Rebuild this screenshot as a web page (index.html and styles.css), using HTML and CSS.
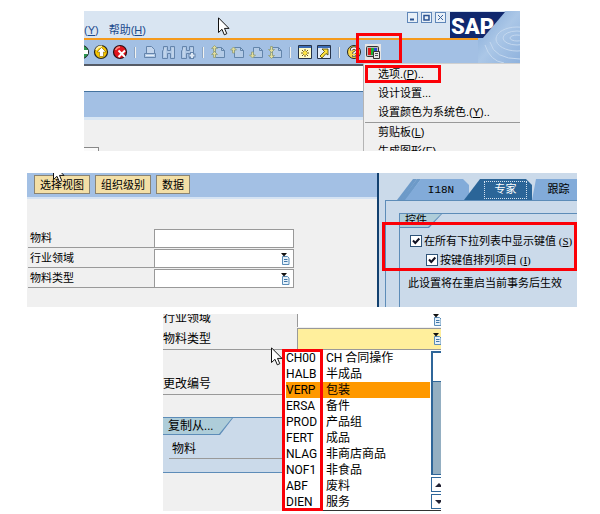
FILE: index.html
```
<!DOCTYPE html>
<html lang="zh-CN">
<head>
    <meta charset="UTF-8">
    <meta name="viewport" content="width=device-width, initial-scale=1.0">
    <title>SAP 选项设置</title>
    <link rel="stylesheet" href="styles.css">
</head>
<body>
    <svg class="defs" width="0" height="0" aria-hidden="true">
        <symbol id="cursor" viewBox="0 0 12 19">
            <path d="M.5 .8V15.5L4 12.3L6.3 17.8L8.8 16.7L6.5 11.4H11Z" fill="#fff" stroke="#111" stroke-width="1"/>
        </symbol>
        <symbol id="page" viewBox="0 0 16 16">
            <path d="M5.500 3.500H11.500L14.500 6.500V13.500H5.500Z" fill="#b4cbe6" stroke="#6385ab"/>
            <path d="M11.500 3.500V6.500H14.500" fill="none" stroke="#6385ab"/>
        </symbol>
        <symbol id="up" viewBox="0 0 7 7">
            <path d="M3.500 .5L6.500 3.500H4.500V6.500H2.500V3.500H.5Z" fill="#e4dd98" stroke="#8e9c7c" stroke-width=".8"/>
        </symbol>
        <symbol id="binoculars" viewBox="0 0 16 16">
            <path d="M2.500 2.500H6.500V6.500H9.500V2.500H13.500V14.500H9.500V9.500H6.500V14.500H1.500V7L2.500 5.500Z" fill="#afc7e4" stroke="#6484ac"/>
            <path d="M4 4V13M12 4V13" stroke="#d2e0f0"/>
        </symbol>
        <symbol id="picker" viewBox="0 0 9 12">
            <path d="M1.500 3.500H6.500L8 5V11.500H1.500Z" fill="#e6f1fa" stroke="#5b8db8"/>
            <path d="M3 6.500H6.500M3 8.500H6.500" stroke="#4177a8"/>
            <path d="M0 0H6L3 3.500Z" fill="#111"/>
        </symbol>
    </svg>

    <main>
        <!-- main window with local layout menu -->
        <section class="shot shot-menu">
            <div class="menubar">
                <button class="menu-btn">(<u>Y</u>)</button>
                <button class="menu-btn">帮助(<u>H</u>)</button>
                <div class="win-controls">
                    <button aria-label="最小化"><svg viewBox="0 0 9 9"><path d="M2 6.500H6" stroke="#2a5291" stroke-width="2"/></svg></button>
                    <button aria-label="最大化"><svg viewBox="0 0 9 9"><path d="M2 2.500H7V7H2Z" fill="none" stroke="#2a5291" stroke-width="1.500"/></svg></button>
                    <button aria-label="关闭"><svg viewBox="0 0 9 9"><path d="M2 2L7 7M7 2L2 7" stroke="#3a629e"/></svg></button>
                </div>
            </div>
            <div class="toolbar">
                <button class="tool first" aria-label="返回"><svg viewBox="0 0 16 16"><circle cx="8" cy="8" r="6.500" fill="#2c9a50" stroke="#222"/><path d="M8 6H14V10H8Z" fill="#fff"/></svg></button>
                <button class="tool" aria-label="退出"><svg viewBox="0 0 16 16"><circle cx="8" cy="8" r="6.500" fill="#f5c400" stroke="#222" stroke-width="1.200"/><path d="M3 6Q5 2 9 2.500" stroke="#fff2a0" stroke-width="2" fill="none"/><path d="M8.500 3.500L13 8H10.500V12.500H6.500V8H4Z" fill="#fff" stroke="#846800" stroke-width=".6"/></svg></button>
                <button class="tool" aria-label="取消"><svg viewBox="0 0 16 16"><circle cx="8" cy="8" r="6.500" fill="#e0141c" stroke="#2a1014" stroke-width="1.200"/><path d="M3.500 6Q5 3 8 3" stroke="#ff8a80" stroke-width="1.500" fill="none"/><path d="M6.500 6.500L13 13M13 6.500L6.500 13" stroke="#fff" stroke-width="2"/></svg></button>
                <span class="sep"></span>
                <button class="tool" aria-label="打印"><svg viewBox="0 0 16 16"><path d="M4.500 9.500V2.500H9.500L12.500 5.500V9.500" fill="#c3d5ec" stroke="#6484ac"/><path d="M2.500 9.500H13.500V13.500H2.500Z" fill="#b4cbe6" stroke="#6484ac"/><path d="M4 11.500H12" stroke="#e2ecf6"/></svg></button>
                <button class="tool" aria-label="查找"><svg viewBox="0 0 16 16"><use href="#binoculars"/></svg></button>
                <button class="tool" aria-label="继续查找"><svg viewBox="0 0 16 16"><use href="#binoculars"/><path d="M12 8V15M8.500 11.500H15.500" stroke="#6484ac" stroke-width="4"/><path d="M12 9V14M9.500 11.500H14.500" stroke="#dde8f4" stroke-width="2"/></svg></button>
                <span class="sep"></span>
                <button class="tool" aria-label="第一页"><svg viewBox="0 0 16 16"><use href="#page"/><use href="#up" x="1" y="1" width="7" height="7"/><use href="#up" x="1" y="7" width="7" height="7"/></svg></button>
                <button class="tool" aria-label="上一页"><svg viewBox="0 0 16 16"><use href="#page"/><use href="#up" x="1" y="2" width="7" height="8"/></svg></button>
                <button class="tool" aria-label="下一页"><svg viewBox="0 0 16 16"><use href="#page"/><use href="#up" x="-8" y="-15" width="7" height="8" transform="rotate(180)"/></svg></button>
                <button class="tool" aria-label="最后一页"><svg viewBox="0 0 16 16"><use href="#page"/><use href="#up" x="-8" y="-9" width="7" height="7" transform="rotate(180)"/><use href="#up" x="-8" y="-15" width="7" height="7" transform="rotate(180)"/></svg></button>
                <span class="sep"></span>
                <button class="tool" aria-label="新建会话"><svg viewBox="0 0 16 16"><path d="M1.500 1.500H14.500V14.500H1.500Z" fill="#fffbc8" stroke="#26334a"/><path d="M2 3H14" stroke="#3c6cb4" stroke-width="2"/><path d="M8 5V13M4 9H12M5 6L11 12M11 6L5 12" stroke="#6e5a10"/><circle cx="8" cy="9" r="2" fill="#ffe640"/></svg></button>
                <button class="tool" aria-label="快捷方式"><svg viewBox="0 0 16 16"><path d="M1.500 1.500H14.500V14.500H1.500Z" fill="#e4edf7" stroke="#26334a"/><path d="M2 3H14" stroke="#3c6cb4" stroke-width="2"/><path d="M6 5H12V11L10 9.500L6 14L4 12L8.500 7.500Z" fill="#ffe23c" stroke="#4a4100" stroke-width=".8"/></svg></button>
                <span class="sep"></span>
                <button class="tool" aria-label="帮助"><svg viewBox="0 0 16 16"><circle cx="8" cy="8" r="6.500" fill="#f8d84a" stroke="#222"/><path d="M5.500 6.500Q5.500 4 8 4T10.500 6.500Q10.500 7.500 8 9V10M8 11V13" fill="none" stroke="#222" stroke-width="3"/><path d="M5.500 6.500Q5.500 4 8 4T10.500 6.500Q10.500 7.500 8 9V10M8 11V12.500" fill="none" stroke="#fff" stroke-width="1.500"/></svg></button>
                <button class="tool pressed" aria-label="定制本地布局"><svg viewBox="0 0 16 16"><rect x="1.500" y="2.500" width="12" height="10" rx="1" fill="#bbb" stroke="#333"/><path d="M3 4H6V11H3Z" fill="#e01818"/><path d="M6 4H9V11H6Z" fill="#18b030"/><path d="M9 4H12V11H9Z" fill="#2848d0"/><path d="M8.500 7.500H14.500V14.500H8.500Z" fill="#e8e8e8" stroke="#333"/><path d="M10 9.500H13M10 11.500H13" stroke="#555"/></svg></button>
            </div>
            <div class="edge"></div>
            <div class="blank"></div>
            <div class="title-band"></div>
            <div class="work-area"><div class="box-corner"></div></div>

            <svg class="logo" viewBox="0 0 70 52" role="img" aria-label="SAP">
                <defs>
                    <linearGradient id="water" x1="0" y1="0" x2="1" y2="1">
                        <stop offset="0" stop-color="#7fa6d6"/>
                        <stop offset=".5" stop-color="#abc7e7"/>
                        <stop offset="1" stop-color="#8fb2dd"/>
                    </linearGradient>
                </defs>
                <path d="M55 0H70V52H28V27H33Z" fill="url(#water)"/>
                <g fill="none" stroke="#c4d8ef" stroke-width="1">
                    <ellipse cx="67" cy="27" rx="7" ry="3"/>
                    <ellipse cx="67" cy="27" rx="14" ry="7"/>
                    <ellipse cx="67" cy="28" rx="21" ry="12"/>
                    <path d="M40 31Q44 48 70 48M35 34Q40 50 54 52"/>
                </g>
                <path d="M0 1H55L33 27H0Z" fill="#10286e"/>
                <text x="1" y="23" class="logo-text">SAP</text>
            </svg>

            <ul class="popup" role="menu">
                <li><button role="menuitem">选项.(<u>P</u>)..</button></li>
                <li><button role="menuitem">设计设置...</button></li>
                <li><button role="menuitem">设置颜色为系统色.(<u>Y</u>)..</button></li>
                <li class="divided"><button role="menuitem">剪贴板(<u>L</u>)</button></li>
                <li><button role="menuitem">生成图形(<u>F</u>)</button></li>
            </ul>
            <div class="mark mark-icon"></div>
            <div class="mark mark-option"></div>
            <svg class="pointer pointer-menu"><use href="#cursor"/></svg>
        </section>

        <!-- material form and expert options -->
        <section class="shot shot-options">
            <div class="form-pane">
                <div class="actions">
                    <button>选择视图</button>
                    <button>组织级别</button>
                    <button>数据</button>
                </div>
                <form class="fields">
                    <div class="field">
                        <label for="material">物料</label>
                        <div class="control"><input type="text" id="material"></div>
                    </div>
                    <div class="field">
                        <label for="industry">行业领域</label>
                        <div class="control"><input type="text" id="industry"><svg class="picker"><use href="#picker"/></svg></div>
                    </div>
                    <div class="field">
                        <label for="mtype">物料类型</label>
                        <div class="control"><input type="text" id="mtype"><svg class="picker"><use href="#picker"/></svg></div>
                    </div>
                </form>
            </div>
            <div class="options-pane">
                <div class="tabs" role="tablist">
                    <span class="tab-stub"></span>
                    <span class="tab-stub"></span>
                    <button class="tab" role="tab">I18N</button>
                    <button class="tab active" role="tab" aria-selected="true"><span>专家</span></button>
                    <button class="tab" role="tab">跟踪</button>
                    <span class="tab tab-more"></span>
                </div>
                <div class="tab-panel">
                    <div class="group">
                        <h2 class="group-title"><span>控件</span></h2>
                        <div class="check">
                            <input type="checkbox" id="showKeys" checked>
                            <label for="showKeys">在所有下拉列表中显示键值 (<u>S</u>)</label>
                        </div>
                        <div class="check nested">
                            <input type="checkbox" id="sortKeys" checked>
                            <label for="sortKeys">按键值排列项目 (<u>I</u>)</label>
                        </div>
                        <p class="note">此设置将在重启当前事务后生效</p>
                    </div>
                </div>
            </div>
            <div class="mark mark-checks"></div>
            <svg class="pointer pointer-form"><use href="#cursor"/></svg>
        </section>

        <!-- opened material type list -->
        <section class="shot shot-list">
            <div class="row row-cut">
                <label for="industry2">行业领域</label>
                <div class="control"><input type="text" id="industry2"><svg class="picker"><use href="#picker"/></svg></div>
            </div>
            <div class="row">
                <label for="mtype2">物料类型</label>
                <div class="control focused"><input type="text" id="mtype2"><svg class="picker"><use href="#picker"/></svg></div>
            </div>
            <div class="row row-change"><span>更改编号</span></div>
            <div class="copy-group">
                <h2 class="group-title"><span>复制从...</span></h2>
                <div class="copy-row">物料</div>
            </div>

            <div class="dropdown">
                <ul class="options" role="listbox" aria-label="物料类型">
                    <li role="option"><span>CH00</span><span>CH 合同操作</span></li>
                    <li role="option"><span>HALB</span><span>半成品</span></li>
                    <li role="option" aria-selected="true" class="selected"><span>VERP</span><span>包装</span></li>
                    <li role="option"><span>ERSA</span><span>备件</span></li>
                    <li role="option"><span>PROD</span><span>产品组</span></li>
                    <li role="option"><span>FERT</span><span>成品</span></li>
                    <li role="option"><span>NLAG</span><span>非商店商品</span></li>
                    <li role="option"><span>NOF1</span><span>非食品</span></li>
                    <li role="option"><span>ABF</span><span>废料</span></li>
                    <li role="option"><span>DIEN</span><span>服务</span></li>
                </ul>
                <div class="scrollbar">
                    <div class="track"><div class="thumb"></div></div>
                    <button aria-label="向上"><svg viewBox="0 0 8 6"><path d="M0 5L4 1L8 5Z" fill="#223"/></svg></button>
                    <button aria-label="向下"><svg viewBox="0 0 8 6"><path d="M0 1L4 5L8 1Z" fill="#223"/></svg></button>
                </div>
            </div>
            <div class="mark mark-keys"></div>
            <svg class="pointer pointer-list"><use href="#cursor"/></svg>
        </section>
    </main>
</body>
</html>
```

FILE: styles.css
```
* {
    box-sizing: border-box;
}

body {
    margin: 0;
    background: #fff;
    color: #000;
    font-family: "Liberation Sans", "Noto Sans CJK SC", sans-serif;
    font-size: 11px;
    line-height: 16px;
}

button,
input {
    margin: 0;
    padding: 0;
    border: none;
    background: none;
    color: inherit;
    font: inherit;
}

ul,
h2,
p {
    margin: 0;
    padding: 0;
    list-style: none;
    font-size: inherit;
    font-weight: normal;
}

svg {
    display: block;
}

.defs {
    position: absolute;
}

main {
    padding-top: 11px;
}

.shot {
    position: relative;
    overflow: hidden;
    background: #f0f0f0;
}

/* red marker frames */
.mark {
    position: absolute;
    border: 3px solid #fb0007;
    pointer-events: none;
}

.pointer {
    position: absolute;
    width: 12px;
    height: 19px;
}

/* main window */
.shot-menu {
    height: 140px;
    margin: 0 80px 22px 84px;
}

.menubar {
    display: flex;
    gap: 10px;
    height: 27px;
    padding-right: 74px;
    background: #d9e5f2;
    color: #1c4a8c;
}

.menu-btn {
    align-self: flex-end;
}

.win-controls {
    display: flex;
    gap: 3px;
    margin: 1px 0 0 auto;
}

.win-controls button {
    width: 11px;
    height: 11px;
    border: 1px solid #5f86b8;
    background: #e8f0f8;
}

.toolbar {
    display: flex;
    align-items: center;
    gap: 3px;
    height: 26px;
    border-top: 2px solid #f59a1c;
    background: #a3c0e4;
}

.tool {
    flex: none;
    width: 16px;
    height: 16px;
}

.tool.first {
    margin-left: -10px;
}

.tool.pressed {
    background: #e6e6e6;
}

.sep {
    flex: none;
    width: 2px;
    height: 11px;
    margin: 0 3px;
    border-left: 1px solid #8ba5c4;
    background: #f2f2ee;
}

.edge {
    height: 2px;
    background: #555b66;
}

.blank {
    height: 25px;
    background: #fff;
}

.title-band {
    height: 29px;
    border-top: 1px solid #44739f;
    border-bottom: 3px solid #d8e6f4;
    background: #a3c0e4;
}

.work-area {
    height: 31px;
    padding-top: 27px;
}

.box-corner {
    width: 15px;
    height: 12px;
    border-top: 1px solid #888;
    border-right: 1px solid #888;
    background: #fafafa;
}

.logo {
    position: absolute;
    top: 0;
    right: 0;
    width: 70px;
    height: 52px;
}

.logo-text {
    fill: #fff;
    font-family: Roboto, sans-serif;
    font-size: 22px;
    font-weight: 900;
}

.popup {
    position: absolute;
    top: 52px;
    right: 0;
    width: 157px;
    padding: 1px 0 0 14px;
    border-top: 1px solid #d0d0d0;
    border-left: 1px solid #b4b4b4;
    background: #f0f0f0;
}

.popup li {
    height: 19px;
}

.popup button {
    line-height: 19px;
    white-space: nowrap;
}

.popup .divided {
    height: 20px;
    margin-left: -13px;
    padding-left: 13px;
    border-top: 1px solid #999;
}

.mark-icon {
    top: 22px;
    right: 118px;
    width: 46px;
    height: 30px;
}

.mark-option {
    top: 54px;
    right: 79px;
    width: 76px;
    height: 18px;
}

.pointer-menu {
    top: 6px;
    left: 134px;
}

/* form and options */
.shot-options {
    display: flex;
    height: 134px;
    margin: 0 23px 7px 27px;
}

.form-pane {
    flex: 1;
    min-width: 0;
}

.actions {
    display: flex;
    gap: 5px;
    height: 26px;
    padding: 2px 7px 3px;
    border-bottom: 2px solid #d5e3f3;
    background: #a3c0e4;
}

.actions button {
    padding: 0 5px;
    border: 1px solid #8b8471;
    background: #f3dfa6;
}

.fields {
    display: grid;
    gap: 1px;
    margin: 30px 83px 0 1px;
}

.field {
    display: grid;
    grid-template-columns: 126px minmax(0, 1fr);
    height: 19px;
}

.field label {
    padding-left: 2px;
    border-bottom: 1px solid #999;
    line-height: 18px;
}

.control {
    display: flex;
    align-items: center;
    min-width: 0;
    border: 1px solid #999;
    background: #fff;
}

.control input {
    flex: 1;
    min-width: 0;
    height: 100%;
    outline: none;
}

.picker {
    flex: none;
    width: 9px;
    height: 12px;
    margin-right: 3px;
}

.options-pane {
    flex: none;
    width: 200px;
    padding: 6px 0 0 6px;
    border-left: 2px solid #12406f;
    background: #cbdaea;
}

.tabs {
    display: flex;
    height: 21px;
    padding-left: 12px;
    font-family: "Liberation Mono", "Noto Sans CJK SC", monospace;
}

.tab,
.tab-stub {
    flex: none;
    background: #82abd9;
    clip-path: polygon(16px 0, calc(100% - 6px) 0, 100% 6px, 100% 100%, 0 100%);
}

.tab-stub {
    width: 20px;
    margin-right: -16px;
    background: #6d9ac8;
    clip-path: polygon(16px 0, 20px 0, 5px 100%, 0 100%);
}

.tab {
    width: 64px;
    padding-left: 8px;
}

.tab.active {
    width: 68px;
    margin-left: -5px;
    background: #2b6598;
    color: #fff;
}

.tab.active span {
    display: block;
    margin: 0 5px 0 12px;
    border: 1px dotted #d4e2f0;
}

.tab.active + .tab {
    width: 53px;
    padding-left: 0;
    clip-path: polygon(4px 0, calc(100% - 6px) 0, 100% 6px, 100% 100%, 0 100%);
}

.tab-more {
    width: 4px;
    padding: 0;
    clip-path: polygon(4px 0, 100% 0, 100% 100%, 0 100%);
}

.tab-panel {
    height: 110px;
    padding: 12px 0 0 13px;
    border-top: 1px solid #5d8cb8;
    border-left: 1px solid #5d8cb8;
}

.group {
    height: 100px;
    border-top: 1px solid #5d8cb8;
    border-left: 1px solid #5d8cb8;
}

.group-title {
    width: 42px;
    background: #5d8cb8;
    clip-path: polygon(0 0, 100% 0, calc(100% - 13px) 100%, 0 100%);
}

.group-title span {
    display: block;
    height: 14px;
    padding-left: 5px;
    background: #aecdd9;
    line-height: 12px;
    clip-path: polygon(0 0, calc(100% - 1px) 0, calc(100% - 14px) calc(100% - 1px), 0 calc(100% - 1px));
}

.check {
    display: flex;
    align-items: center;
    gap: 2px;
    height: 19px;
    margin-left: 10px;
    font-family: "Liberation Serif", "Noto Sans CJK SC", serif;
    white-space: nowrap;
}

.group-title + .check {
    margin-top: 3px;
}

.check.nested {
    margin-left: 26px;
}

.check input {
    appearance: none;
    flex: none;
    width: 12px;
    height: 12px;
    border: 1px solid #2f5378;
    background: #fff;
}

.check input:checked {
    background: #fff url("data:image/svg+xml,%3Csvg xmlns='http://www.w3.org/2000/svg' viewBox='0 0 10 10'%3E%3Cpath d='M2 4.500L4.300 7L8.300 2.500' fill='none' stroke='%23112' stroke-width='2'/%3E%3C/svg%3E") center / 10px 10px;
}

.note {
    margin: 6px 0 0 8px;
    white-space: nowrap;
}

.mark-checks {
    top: 49px;
    right: 0;
    width: 195px;
    height: 49px;
}

.pointer-form {
    top: -9px;
    left: 26px;
}

/* material type list */
.shot-list {
    height: 197px;
    margin: 0 159px 0 163px;
    font-family: Roboto, "Noto Sans CJK SC", sans-serif;
    font-size: 12px;
}

.row {
    display: grid;
    grid-template-columns: 134px minmax(0, 1fr);
    height: 21px;
    margin-top: 1px;
}

.row > label,
.row > span {
    padding-top: 2px;
    border-bottom: 1px solid #999;
    line-height: 19px;
}

.row .control {
    border-right: none;
}

.row .picker {
    margin-right: -1px;
}

.row-cut {
    height: 13px;
    margin-top: 0;
    overflow: hidden;
}

.row-cut > label {
    padding-top: 0;
    line-height: 9px;
}

.row-cut .control {
    align-items: flex-end;
    border-top: none;
}

.row-cut .picker {
    margin-bottom: 4px;
}

.row .focused {
    background: #ffef9c;
}

.row-change {
    height: 20px;
    margin-top: 24px;
}

.copy-group {
    height: 56px;
    margin-top: 24px;
    border-top: 1px solid #5d8cb8;
    border-bottom: 1px solid #5d8cb8;
    background: #cbdaea;
}

.copy-group .group-title {
    width: 70px;
}

.copy-group .group-title span {
    height: 17px;
    line-height: 17px;
}

.copy-row {
    margin: 5px 0 0 6px;
    padding-left: 3px;
    border-bottom: 1px solid #999;
    line-height: 18px;
}

.dropdown {
    position: absolute;
    top: 36px;
    left: 120px;
    right: 0;
    display: flex;
    border-bottom: 1px solid #333;
    background: #fff;
}

.options {
    flex: 1;
}

.options li {
    display: grid;
    grid-template-columns: 40px 1fr;
    height: 16px;
    margin-left: 3px;
    line-height: 16px;
    white-space: nowrap;
}

.options .selected {
    background: #ff9900;
}

.scrollbar {
    display: flex;
    flex-direction: column;
    gap: 2px;
    width: 10px;
    margin: 1px 0 1px 1px;
    overflow: hidden;
}

.track {
    flex: 1;
    border-top: 2px solid #2f6699;
    border-left: 2px solid #2f6699;
    border-bottom: 1px solid #2f6699;
    background: #94afc2;
}

.thumb {
    height: 29px;
    border-bottom: 1px solid #2f6699;
    background: #fff;
}

.scrollbar button {
    height: 15px;
    padding-left: 3px;
    border: 1px solid #2f6699;
    border-right: none;
    background: #fff;
}

.scrollbar svg {
    width: 8px;
    height: 6px;
}

.mark-keys {
    top: 35px;
    left: 119px;
    width: 41px;
    height: 162px;
}

.pointer-list {
    top: 33px;
    left: 108px;
}
```
